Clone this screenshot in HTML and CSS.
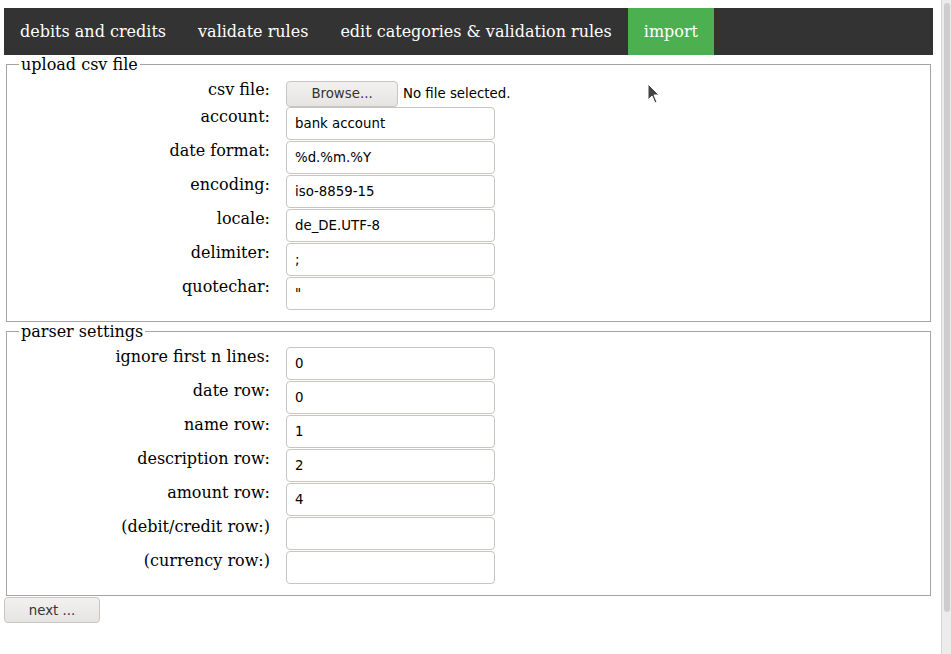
FILE: index.html
```html
<!DOCTYPE html>
<html>
<head>
<meta charset="utf-8">
<link rel="stylesheet" href="styles.css">
</head>
<body>
<div class="window">
  <div class="page">
    <nav class="nav">
      <a class="nav-item">debits and credits</a>
      <a class="nav-item">validate rules</a>
      <a class="nav-item">edit categories &amp; validation rules</a>
      <a class="nav-item active">import</a>
    </nav>
    <form class="form">
      <fieldset class="group">
        <legend class="legend">upload csv file</legend>
        <div class="grid">
          <label class="lbl">csv file:</label>
          <div class="file-row"><span class="btn browse">Browse...</span><span class="file-name">No file selected.</span></div>
          <label class="lbl">account:</label>
          <div class="field"><span class="input">bank account</span></div>
          <label class="lbl">date format:</label>
          <div class="field"><span class="input">%d.%m.%Y</span></div>
          <label class="lbl">encoding:</label>
          <div class="field"><span class="input">iso-8859-15</span></div>
          <label class="lbl">locale:</label>
          <div class="field"><span class="input">de_DE.UTF-8</span></div>
          <label class="lbl">delimiter:</label>
          <div class="field"><span class="input">;</span></div>
          <label class="lbl">quotechar:</label>
          <div class="field"><span class="input">"</span></div>
        </div>
      </fieldset>
      <fieldset class="group">
        <legend class="legend">parser settings</legend>
        <div class="grid">
          <label class="lbl">ignore first n lines:</label>
          <div class="field"><span class="input">0</span></div>
          <label class="lbl">date row:</label>
          <div class="field"><span class="input">0</span></div>
          <label class="lbl">name row:</label>
          <div class="field"><span class="input">1</span></div>
          <label class="lbl">description row:</label>
          <div class="field"><span class="input">2</span></div>
          <label class="lbl">amount row:</label>
          <div class="field"><span class="input">4</span></div>
          <label class="lbl">(debit/credit row:)</label>
          <div class="field"><span class="input"></span></div>
          <label class="lbl">(currency row:)</label>
          <div class="field"><span class="input"></span></div>
        </div>
      </fieldset>
      <span class="btn next">next ...</span>
    </form>
    <svg class="cursor" width="14" height="22" viewBox="0 0 14 22"><path d="M1 1 L1 17 L5 13 L8 20 L10 19 L7 12 L12 12 Z" fill="#444" stroke="#fff" stroke-width="1"/></svg>
  </div>
  <div class="scrollbar"><div class="thumb"></div></div>
</div>
</body>
</html>
```
FILE: styles.css
```css
html, body {
  margin: 0;
  padding: 0;
  background: #fff;
}
.window {
  display: flex;
  width: 951px;
  height: 654px;
  overflow: hidden;
}
.page {
  position: relative;
  flex: 1;
  padding: 8px 8px 0 4px;
  font-family: "DejaVu Serif", serif;
  font-size: 16px;
  color: #000;
}
.nav {
  display: flex;
  background: #333;
}
.nav-item {
  color: #fff;
  padding: 14px 16px;
  line-height: 19px;
  white-space: nowrap;
}
.nav-item.active {
  background: #4CAF50;
}
.form {
  margin: 0;
}
.group {
  margin: 0 2px;
  border: 1px solid #a4a4a4;
  padding: 0 12px 10px 12px;
}
.legend {
  padding: 0 2px;
  line-height: 19px;
}
.grid {
  display: grid;
  grid-template-columns: 251px 209px;
  column-gap: 16px;
  align-items: start;
  padding-top: 6px;
}
.lbl {
  text-align: right;
  line-height: 19px;
}
.file-row {
  display: flex;
  align-items: center;
  height: 27px;
  white-space: nowrap;
  font-family: "DejaVu Sans", sans-serif;
  font-size: 13.33px;
}
.field {
  height: 34px;
}
.input {
  display: flex;
  align-items: center;
  box-sizing: border-box;
  height: 33px;
  width: 209px;
  border: 1px solid #c8c5c0;
  border-radius: 4px;
  padding: 0 8px;
  font-family: "DejaVu Sans", sans-serif;
  font-size: 13.33px;
  color: #000;
  background: #fff;
}
.btn {
  display: flex;
  align-items: center;
  justify-content: center;
  box-sizing: border-box;
  flex-shrink: 0;
  height: 26px;
  border: 1px solid #c8c5c0;
  border-radius: 4px;
  background: linear-gradient(#f2f1f0, #e6e5e4);
  font-family: "DejaVu Sans", sans-serif;
  font-size: 13.33px;
  color: #333;
}
.browse {
  width: 112px;
}
.file-name {
  margin-left: 5px;
  color: #000;
}
.next {
  width: 96px;
  margin-top: 1px;
}
.cursor {
  position: absolute;
  left: 647px;
  top: 83px;
}
.scrollbar {
  width: 10px;
  height: 654px;
  background: #ececec;
  border-left: 1px solid #d6d6d6;
  padding: 3px 1px 0 2px;
  box-sizing: border-box;
}
.thumb {
  width: 6px;
  height: 609px;
  background: #cdcdcd;
  border-radius: 3px;
}
```
